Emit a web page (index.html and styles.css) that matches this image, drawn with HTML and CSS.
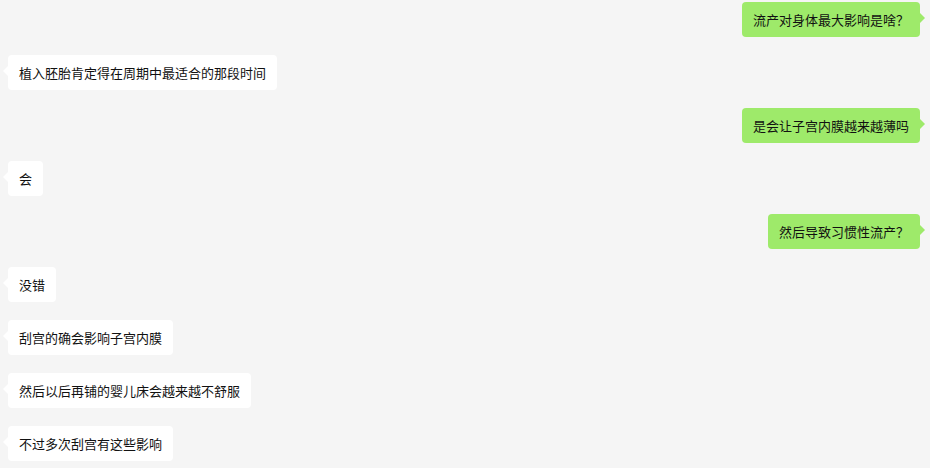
FILE: index.html
```html
<!DOCTYPE html>
<html lang="zh-CN">
<head>
    <meta charset="UTF-8">
    <title>聊天记录</title>
    <link rel="stylesheet" href="styles.css">
</head>
<body>
    <!-- 聊天列表 -->
    <main class="chat">
        <div class="msg msg-right"><div class="bubble">流产对身体最大影响是啥？</div></div>
        <div class="msg msg-left"><div class="bubble">植入胚胎肯定得在周期中最适合的那段时间</div></div>
        <div class="msg msg-right"><div class="bubble">是会让子宫内膜越来越薄吗</div></div>
        <div class="msg msg-left"><div class="bubble">会</div></div>
        <div class="msg msg-right"><div class="bubble">然后导致习惯性流产？</div></div>
        <div class="msg msg-left"><div class="bubble">没错</div></div>
        <div class="msg msg-left"><div class="bubble">刮宫的确会影响子宫内膜</div></div>
        <div class="msg msg-left"><div class="bubble">然后以后再铺的婴儿床会越来越不舒服</div></div>
        <div class="msg msg-left"><div class="bubble">不过多次刮宫有这些影响</div></div>
    </main>
</body>
</html>
```

FILE: styles.css
```css
/* ========= 全局重置 ========= */
* {
    margin: 0;
    padding: 0;
    box-sizing: border-box;
}

body {
    background: #f5f5f5;
    font-family: "Noto Sans CJK SC", "Liberation Sans", sans-serif;
    font-size: 13px;
    color: #111;
    width: 930px;
    height: 468px;
    overflow: hidden;
}

/* ========= 聊天列表 ========= */
.chat {
    display: flex;
    flex-direction: column;
    gap: 18px;
    padding: 2px 10px 0 8px;
}

.msg {
    display: flex;
}

.msg-right {
    justify-content: flex-end;
}

.bubble {
    position: relative;
    height: 35px;
    line-height: 19px;
    padding: 8px 11px;
    border-radius: 4px;
    white-space: nowrap;
}

.msg-left .bubble {
    background: #fff;
}

.msg-right .bubble {
    background: #9eea6a;
}

/* 小三角 */
.bubble::before {
    content: "";
    position: absolute;
    top: 11px;
    border: 5px solid transparent;
}

.msg-left .bubble::before {
    left: -10px;
    border-right-color: #fff;
}

.msg-right .bubble::before {
    right: -10px;
    border-left-color: #9eea6a;
}
```
